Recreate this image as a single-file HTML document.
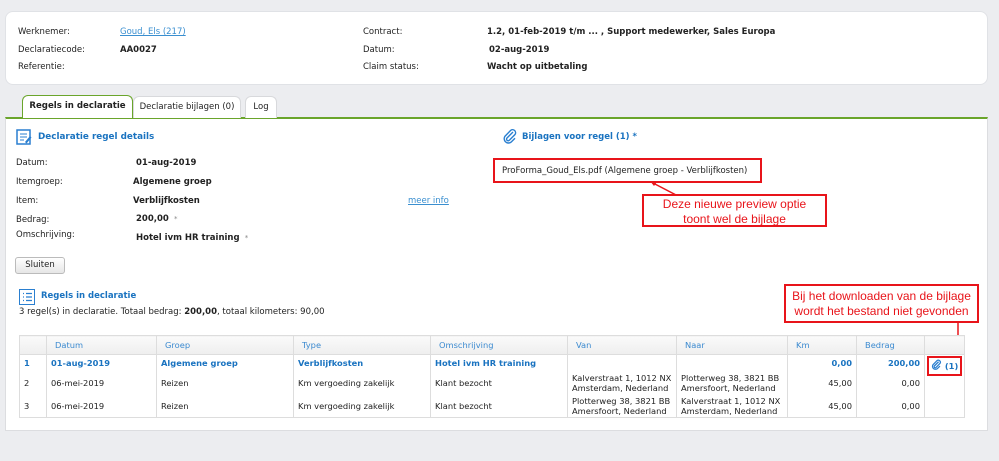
<!DOCTYPE html>
<html><head><meta charset="utf-8"><style>
*{margin:0;padding:0;box-sizing:border-box}
body{width:999px;height:461px;background:#ecedf0;font-family:"DejaVu Sans","Liberation Sans",sans-serif;font-size:8.5px;color:#222;position:relative;overflow:hidden}
.a{position:absolute;white-space:nowrap}
.b{font-weight:bold}
.blue{color:#1a73c0}
.card{position:absolute;left:5px;top:11px;width:983px;height:74px;background:#fff;border-radius:8px;border:1px solid #e0e2e6}
.main{position:absolute;left:5px;top:117px;width:983px;height:314px;background:#fff;border-top:2px solid #6aa52b;border-left:1px solid #dcdde0;border-right:1px solid #dcdde0;border-bottom:1px solid #dcdde0}
.tab{position:absolute;top:96px;height:22px;background:#fff;border:1px solid #d8d9dc;border-bottom:none;border-radius:6px 6px 0 0;padding-top:5px;text-align:center;white-space:nowrap}
table{position:absolute;left:19px;top:335px;border-collapse:collapse;font-size:8.3px;table-layout:fixed;width:945px}
td,th{border-left:1px solid #ddd;border-right:1px solid #ddd;vertical-align:middle;padding:0 4px;white-space:nowrap;overflow:hidden}
th{height:19px;background:linear-gradient(#fafafa,#eee);color:#3b8ad0;font-weight:normal;text-align:left;padding-left:8px;border-bottom:1px solid #ddd;border-top:1px solid #ddd}
tr.r1 td{height:16px;color:#1a73c0;font-weight:bold}
tr.r2 td{height:25px}
tr.r3 td{height:22px}
table{border-bottom:1px solid #ddd}
.ad{line-height:10px}
.r{text-align:right}
.red{position:absolute;border:2px solid #e8141a;color:#e8141a;font-family:"Liberation Sans",sans-serif;font-size:12px;text-align:center;background:#fff;line-height:15px;white-space:nowrap}
</style></head><body>
<div class="card"></div>
<div class="a" style="left:18px;top:27px">Werknemer:</div>
<div class="a" style="left:120px;top:27px;text-decoration:underline;color:#3a8fd0">Goud, Els (217)</div>
<div class="a" style="left:18px;top:45px">Declaratiecode:</div>
<div class="a b" style="left:120px;top:45px">AA0027</div>
<div class="a" style="left:18px;top:62px">Referentie:</div>
<div class="a" style="left:363px;top:27px">Contract:</div>
<div class="a b" style="left:487px;top:27px">1.2, 01-feb-2019 t/m ... , Support medewerker, Sales Europa</div>
<div class="a" style="left:363px;top:45px">Datum:</div>
<div class="a b" style="left:489px;top:45px">02-aug-2019</div>
<div class="a" style="left:363px;top:62px">Claim status:</div>
<div class="a b" style="left:487px;top:62px">Wacht op uitbetaling</div>

<div class="main"></div>
<div class="tab" style="left:133px;width:108px">Declaratie bijlagen (0)</div>
<div class="tab" style="left:245px;width:32px">Log</div>
<div class="tab b" style="left:22px;width:111px;height:23px;border:1px solid #6aa52b;border-bottom:none;top:95px;z-index:2;font-size:8.6px">Regels in declaratie</div>

<svg class="a" style="left:16px;top:129px" width="16" height="16" viewBox="0 0 16 16"><rect x="1" y="1" width="13" height="14" fill="none" stroke="#2a7fd0" stroke-width="1.5"/><path d="M4 5h7M4 8h7M4 11h4" stroke="#2a7fd0"/><path d="M9 13l5-6 1.5 1.5-5 6z" fill="#2a7fd0"/></svg>
<div class="a b blue" style="left:38px;top:132px;font-size:8.8px">Declaratie regel details</div>
<div class="a" style="left:16px;top:158px">Datum:</div><div class="a b" style="left:136px;top:158px">01-aug-2019</div>
<div class="a" style="left:16px;top:177px">Itemgroep:</div><div class="a b" style="left:133px;top:177px">Algemene groep</div>
<div class="a" style="left:16px;top:196px">Item:</div><div class="a b" style="left:133px;top:196px">Verblijfkosten</div>
<div class="a" style="left:408px;top:196px;text-decoration:underline;color:#3a8fd0">meer info</div>
<div class="a" style="left:16px;top:215px">Bedrag:</div><div class="a b" style="left:136px;top:214px">200,00 <span style="font-weight:normal;color:#888;font-size:7px">&nbsp;*</span></div>
<div class="a" style="left:16px;top:230px">Omschrijving:</div><div class="a b" style="left:136px;top:233px">Hotel ivm HR training <span style="font-weight:normal;color:#888;font-size:7px">&nbsp;*</span></div>
<div class="a" style="left:15px;top:257px;width:50px;height:17px;border:1px solid #bbb;border-radius:3px;background:linear-gradient(#fff,#e6e6e6);text-align:center;line-height:15px">Sluiten</div>

<svg class="a" style="left:502px;top:128px" width="16" height="16" viewBox="0 0 16 16"><path d="M11 4L5 10a1.6 1.6 0 0 0 2.3 2.3L13 6.5a3 3 0 0 0-4.2-4.2L3 8.2a4.3 4.3 0 0 0 6 6l4-4" fill="none" stroke="#2a7fd0" stroke-width="1.4"/></svg>
<div class="a b blue" style="left:522px;top:132px">Bijlagen voor regel (1) *</div>
<div class="a" style="left:493px;top:158px;width:269px;height:25px;border:2px solid #e8141a;padding:6px 0 0 7px">ProForma_Goud_Els.pdf (Algemene groep - Verblijfkosten)</div>
<svg class="a" style="left:650px;top:180px" width="30" height="20"><path d="M28 16L3 3" stroke="#e8141a" stroke-width="1.5"/><path d="M0 1l7 1-3 4z" fill="#e8141a"/></svg>
<div class="red" style="left:642px;top:194px;width:185px;height:33px;padding-top:1px">Deze nieuwe preview optie<br>toont wel de bijlage</div>

<div class="red" style="left:784px;top:284px;width:195px;height:39px;padding-top:3px">Bij het downloaden van de bijlage<br>wordt het bestand niet gevonden</div>
<svg class="a" style="left:953px;top:322px" width="10" height="30"><path d="M5 0v25" stroke="#e8141a" stroke-width="1.5"/><path d="M1 23h8l-4 6z" fill="#e8141a"/></svg>

<svg class="a" style="left:19px;top:289px" width="16" height="16"><rect x="0.5" y="0.5" width="15" height="15" fill="none" stroke="#2a7fd0"/><path d="M4 4.5h1M7 4.5h6M4 8h1M7 8h6M4 11.5h1M7 11.5h6" stroke="#2a7fd0" stroke-width="1.3"/></svg>
<div class="a b blue" style="left:41px;top:291px">Regels in declaratie</div>
<div class="a" style="left:19px;top:307px">3 regel(s) in declaratie. Totaal bedrag: <b>200,00</b>, totaal kilometers: 90,00</div>

<table>
<colgroup><col style="width:27px"><col style="width:110px"><col style="width:137px"><col style="width:137px"><col style="width:137px"><col style="width:109px"><col style="width:111px"><col style="width:69px"><col style="width:68px"><col style="width:40px"></colgroup>
<tr><th></th><th>Datum</th><th>Groep</th><th>Type</th><th>Omschrijving</th><th>Van</th><th>Naar</th><th>Km</th><th>Bedrag</th><th></th></tr>
<tr class="r1"><td>1</td><td>01-aug-2019</td><td>Algemene groep</td><td>Verblijfkosten</td><td>Hotel ivm HR training</td><td></td><td></td><td class="r">0,00</td><td class="r">200,00</td><td style="padding:0 2px;overflow:visible"><div style="border:2px solid #e8141a;height:20px;margin:1px 0 -6px;line-height:16px;color:#1a73c0;padding-left:2px"><svg width="11" height="11" viewBox="0 0 16 16" style="vertical-align:-1px"><path d="M11 4L5 10a1.6 1.6 0 0 0 2.3 2.3L13 6.5a3 3 0 0 0-4.2-4.2L3 8.2a4.3 4.3 0 0 0 6 6l4-4" fill="none" stroke="#2a7fd0" stroke-width="1.8"/></svg> (1)</div></td></tr>
<tr class="r2"><td>2</td><td>06-mei-2019</td><td>Reizen</td><td>Km vergoeding zakelijk</td><td>Klant bezocht</td><td class="ad">Kalverstraat 1, 1012 NX<br>Amsterdam, Nederland</td><td class="ad">Plotterweg 38, 3821 BB<br>Amersfoort, Nederland</td><td class="r">45,00</td><td class="r">0,00</td><td></td></tr>
<tr class="r3"><td>3</td><td>06-mei-2019</td><td>Reizen</td><td>Km vergoeding zakelijk</td><td>Klant bezocht</td><td class="ad">Plotterweg 38, 3821 BB<br>Amersfoort, Nederland</td><td class="ad">Kalverstraat 1, 1012 NX<br>Amsterdam, Nederland</td><td class="r">45,00</td><td class="r">0,00</td><td></td></tr>
</table>
</body></html>
